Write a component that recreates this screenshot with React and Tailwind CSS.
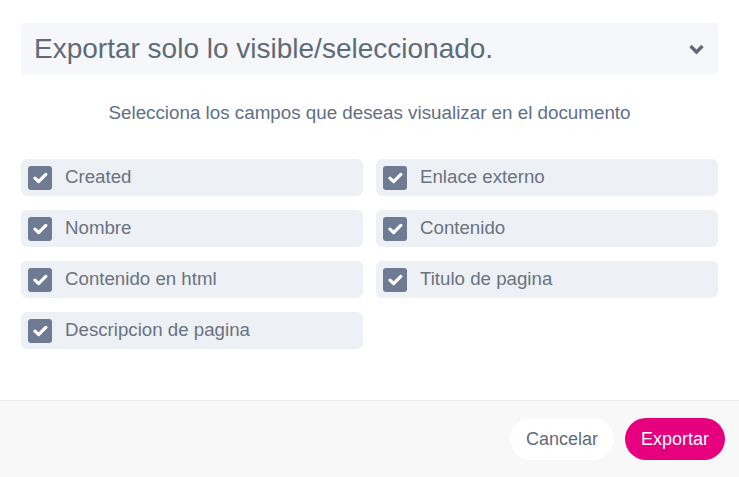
import React from "react";

const fields = [
  "Created",
  "Enlace externo",
  "Nombre",
  "Contenido",
  "Contenido en html",
  "Titulo de pagina",
  "Descripcion de pagina",
];

function Check() {
  return (
    <span className="flex h-6 w-6 shrink-0 items-center justify-center rounded-[3px] bg-[#6e7b93]">
      <svg width="15" height="12" viewBox="0 0 15 12">
        <path d="M2 6.2 L5.6 9.6 L12.8 2.4" fill="none" stroke="white" strokeWidth="3.2" strokeLinecap="round" strokeLinejoin="round" />
      </svg>
    </span>
  );
}

export default function App() {
  return (
    <div className="flex h-[477px] w-[739px] flex-col bg-white font-['Liberation_Sans',Arial,sans-serif]">
      <div className="flex-1 px-[21px] pt-[23px]">
        <div className="flex h-[51px] items-center justify-between rounded-[3px] bg-[#f5f7fa] pl-[13px] pr-[13px]">
          <span className="text-[28px] leading-[32px] text-[#5f6b78]">Exportar solo lo visible/seleccionado.</span>
          <svg width="17" height="12" viewBox="0 0 17 12">
            <path d="M2.5 3 L8.5 9 L14.5 3" fill="none" stroke="#5f6b78" strokeWidth="3.4" />
          </svg>
        </div>
        <p className="mt-[28px] text-center text-[18.8px] leading-[22px] text-[#5f6f86]">
          Selecciona los campos que deseas visualizar en el documento
        </p>
        <div className="mt-[35px] grid grid-cols-2 gap-x-[13px] gap-y-[14px]">
          {fields.map((f) => (
            <div key={f} className="flex h-[37px] items-center gap-[13px] rounded-[6px] bg-[#edf1f5] pl-[7px]">
              <Check />
              <span className="text-[18.7px] text-[#6b7280]">{f}</span>
            </div>
          ))}
        </div>
      </div>
      <div className="flex h-[77px] items-center justify-end gap-[11px] border-t border-[#ececec] bg-[#f8f8f8] pr-[14px]">
        <button className="h-[42px] rounded-full bg-white px-[16px] text-[18px] text-[#5f6b78]">Cancelar</button>
        <button className="h-[42px] rounded-full bg-[#e6007e] px-[16px] text-[18px] text-white">Exportar</button>
      </div>
    </div>
  );
}
